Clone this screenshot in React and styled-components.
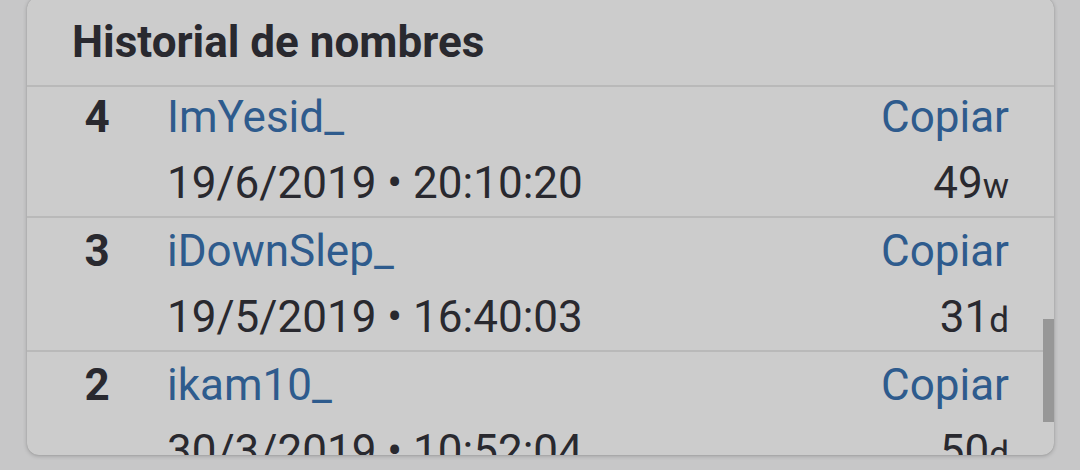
import React, { useLayoutEffect, useRef } from "react"
import styled, { createGlobalStyle } from "styled-components"

const textColor = "#29292f"
const linkColor = "#2e5b8d"
const lineColor = "#b9b9b9"

const GlobalStyle = createGlobalStyle`
	html, body {
		margin: 0;
		padding: 0;
		background: #c7c7c8;
		font-family: Roboto, "Noto Sans", sans-serif;
		overflow: hidden;
	}
`

const Page = styled.div`
	height: 470px;
	padding: 0 26px 0 27px;
	overflow: hidden;
`

const Card = styled.section`
	margin-top: -3px;
	height: 458px;
	background: #cccccc;
	border-radius: 12px;
	box-shadow: 0 1px 4px rgba(0, 0, 0, 0.22), 0 0 1px rgba(0, 0, 0, 0.2);
	overflow: hidden;
	display: flex;
	flex-direction: column;
`

const Header = styled.h2`
	margin: 0;
	padding: 17px 45px 15px;
	font-size: 44px;
	line-height: 56px;
	font-weight: 700;
	color: ${ textColor };
	border-bottom: 2px solid ${ lineColor };
`

const ListWrap = styled.div`
	position: relative;
	flex: 1;
	min-height: 0;
`

const List = styled.div`
	height: 100%;
	overflow: hidden;
`

const Thumb = styled.div`
	position: absolute;
	right: 0;
	top: 232px;
	width: 11px;
	height: 103px;
	background: #979797;
`

const Row = styled.div`
	display: grid;
	grid-template-columns: 140px 1fr auto;
	grid-template-rows: 66px 66px;
	padding-right: 45px;
	border-bottom: 2px solid ${ lineColor };
	font-size: 44px;
	line-height: 66px;
	color: ${ textColor };
`

const Num = styled.div`
	font-weight: 700;
	text-align: center;
`

const Link = styled.a`
	color: ${ linkColor };
	text-decoration: none;
	justify-self: ${ props => props.right ? "end" : "start" };
`

const DateText = styled.div`
	grid-column: 2;
	white-space: nowrap;
`

const Ago = styled.div`
	text-align: right;
`

const Unit = styled.span`
	font-size: 35px;
`

const names = [
	{ n: 4, name: "ImYesid_", date: "19/6/2019 • 20:10:20", ago: "49", unit: "w" },
	{ n: 3, name: "iDownSlep_", date: "19/5/2019 • 16:40:03", ago: "31", unit: "d" },
	{ n: 2, name: "ikam10_", date: "30/3/2019 • 10:52:04", ago: "50", unit: "d" }
]

export default function App() {
	const listRef = useRef(null)

	useLayoutEffect(() => {
		if (listRef.current) listRef.current.scrollTop = 3
	}, [])

	return <Page>
		<GlobalStyle />
		<Card>
			<Header>Historial de nombres</Header>
			<ListWrap>
				<List ref={ listRef }>
					{ names.map(item => <Row key={ item.n }>
						<Num>{ item.n }</Num>
						<Link href="#">{ item.name }</Link>
						<Link href="#" right>Copiar</Link>
						<DateText>{ item.date }</DateText>
						<Ago>{ item.ago }<Unit>{ item.unit }</Unit></Ago>
					</Row>) }
					<Row />
				</List>
				<Thumb />
			</ListWrap>
		</Card>
	</Page>
}
